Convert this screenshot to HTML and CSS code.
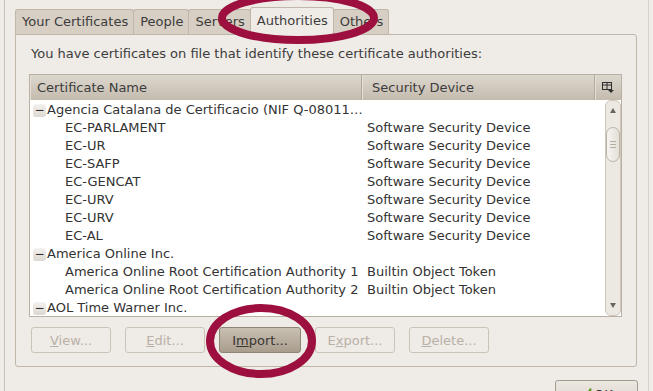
FILE: index.html
```html
<!DOCTYPE html>
<html lang="en">
<head>
    <meta charset="UTF-8">
    <title>Certificate Manager</title>
    <link rel="stylesheet" href="styles.css">
</head>
<body>
    <div class="dialog">
        <div class="tabs">
            <div class="tab">Your Certificates</div>
            <div class="tab">People</div>
            <div class="tab">Servers</div>
            <div class="tab active">Authorities</div>
            <div class="tab">Others</div>
        </div>
        <div class="panel">
            <p class="intro">You have certificates on file that identify these certificate authorities:</p>
            <div class="tree">
                <div class="tree-head">
                    <div class="col col-name">Certificate Name</div>
                    <div class="col col-device">Security Device</div>
                    <div class="col col-pick">
                        <svg width="12" height="11" viewBox="0 0 12 11">
                            <rect x="0.5" y="0.5" width="9" height="7" fill="none" stroke="#2e2e2e"/>
                            <line x1="0.5" y1="3" x2="9.5" y2="3" stroke="#2e2e2e"/>
                            <line x1="5" y1="0.5" x2="5" y2="7.5" stroke="#2e2e2e"/>
                            <polygon points="6,8 12,8 9,11" fill="#2e2e2e"/>
                        </svg>
                    </div>
                </div>
                <div class="tree-body">
                    <div class="rows">
                        <div class="row parent"><span class="name"><span class="expander">&minus;</span>Agencia Catalana de Certificacio (NIF Q-08011…</span><span class="device"></span></div>
                        <div class="row"><span class="name">EC-PARLAMENT</span><span class="device">Software Security Device</span></div>
                        <div class="row"><span class="name">EC-UR</span><span class="device">Software Security Device</span></div>
                        <div class="row"><span class="name">EC-SAFP</span><span class="device">Software Security Device</span></div>
                        <div class="row"><span class="name">EC-GENCAT</span><span class="device">Software Security Device</span></div>
                        <div class="row"><span class="name">EC-URV</span><span class="device">Software Security Device</span></div>
                        <div class="row"><span class="name">EC-URV</span><span class="device">Software Security Device</span></div>
                        <div class="row"><span class="name">EC-AL</span><span class="device">Software Security Device</span></div>
                        <div class="row parent"><span class="name"><span class="expander">&minus;</span>America Online Inc.</span><span class="device"></span></div>
                        <div class="row"><span class="name">America Online Root Certification Authority 1</span><span class="device">Builtin Object Token</span></div>
                        <div class="row"><span class="name">America Online Root Certification Authority 2</span><span class="device">Builtin Object Token</span></div>
                        <div class="row parent"><span class="name"><span class="expander">&minus;</span>AOL Time Warner Inc.</span><span class="device"></span></div>
                    </div>
                    <div class="scrollbar">
                        <div class="arrow up"></div>
                        <div class="thumb"><span></span><span></span><span></span></div>
                        <div class="arrow down"></div>
                    </div>
                </div>
            </div>
            <div class="buttons">
                <button class="btn" disabled><u>V</u>iew...</button>
                <button class="btn" disabled><u>E</u>dit...</button>
                <button class="btn hot">I<u>m</u>port...</button>
                <button class="btn" disabled>E<u>x</u>port...</button>
                <button class="btn" disabled><u>D</u>elete...</button>
            </div>
        </div>
        <div class="actions">
            <button class="btn ok">
                <svg width="12" height="12" viewBox="0 0 12 12">
                    <path d="M1.5 6.5 L4.5 10 L10.5 1.5" fill="none" stroke="#5c9a1e" stroke-width="2.2" stroke-linecap="round" stroke-linejoin="round"/>
                </svg>
                OK
            </button>
        </div>
    </div>

    <!-- hand-drawn marks over the screenshot -->
    <svg class="marks" width="653" height="391" viewBox="0 0 653 391">
        <ellipse cx="298" cy="18" rx="76" ry="22" fill="none" stroke="#9c0f3e" stroke-width="8"/>
        <ellipse cx="261" cy="341" rx="51" ry="33" fill="none" stroke="#9c0f3e" stroke-width="8"/>
    </svg>
</body>
</html>
```

FILE: styles.css
```css
* {
    margin: 0;
    padding: 0;
    box-sizing: border-box;
}

body {
    background: #efebe7;
    font-family: 'DejaVu Sans', 'Liberation Sans', sans-serif;
    font-size: 13px;
    color: #3c3c3c;
    height: 391px;
    overflow: hidden;
    position: relative;
}

.dialog {
    margin: 0 4px;
    height: 391px;
    border-left: 1px solid #c9c1b5;
    border-right: 1px solid #d6cfc5;
    padding: 7px 11px 0 10px;
}

/* notebook tabs */
.tabs {
    display: flex;
    align-items: flex-end;
    height: 28px;
    margin-bottom: -1px;
    position: relative;
    z-index: 1;
}

.tab {
    height: 25px;
    margin-bottom: 1px;
    margin-right: -1px;
    padding: 0 5px 0 6px;
    line-height: 24px;
    background: #d7cfc3;
    border: 1px solid #c0b6a9;
    border-bottom: none;
    border-radius: 3px 3px 0 0;
    color: #3c3c3c;
    white-space: nowrap;
}

.tab.active {
    height: 28px;
    margin-bottom: 0;
    line-height: 26px;
    background: #efebe7;
    position: relative;
    z-index: 1;
}

.panel {
    height: 333px;
    border: 1px solid #c0b6a9;
    border-radius: 0 3px 3px 3px;
    padding: 10px 14px 0 13px;
}

.intro {
    height: 18px;
    line-height: 18px;
    padding-left: 2px;
    margin-bottom: 11px;
    white-space: nowrap;
}

/* certificate tree */
.tree {
    border: 1px solid #b9afa2;
    background: #fff;
}

.tree-head {
    display: flex;
    height: 25px;
    background: linear-gradient(#ddd7ce, #c4bbae);
    line-height: 25px;
}

.tree-head .col {
    border-right: 1px solid #b3a999;
    box-shadow: inset 1px 0 0 #e4dfd7;
}

.col-name {
    width: 332px;
    padding-left: 7px;
}

.col-device {
    width: 233px;
    padding-left: 10px;
}

.col-pick {
    width: 26px;
    border-right: none !important;
    display: flex;
    align-items: center;
    justify-content: center;
}

.tree-body {
    display: flex;
    height: 216px;
}

.rows {
    flex: 1;
    padding-top: 1px;
}

.row {
    display: flex;
    height: 18px;
    line-height: 18px;
    color: #333;
    white-space: nowrap;
}

.row .name {
    width: 332px;
    padding-left: 35px;
    overflow: hidden;
}

.row.parent .name {
    padding-left: 3px;
    display: flex;
    align-items: center;
}

.row .device {
    padding-left: 5px;
}

.expander {
    width: 13px;
    height: 13px;
    margin-right: 1px;
    border-radius: 3px;
    background: linear-gradient(#f4f2ef, #dcd7d0);
    font-size: 12px;
    line-height: 12px;
    text-align: center;
    color: #2e2e2e;
    flex-shrink: 0;
}

/* scrollbar */
.scrollbar {
    width: 16px;
    border: 1px solid #cfc7bb;
    border-radius: 6px;
    background: #ece8e2;
    display: flex;
    flex-direction: column;
    align-items: center;
}

.arrow {
    width: 0;
    height: 0;
    border-left: 3px solid transparent;
    border-right: 3px solid transparent;
}

.arrow.up {
    margin-top: 7px;
    border-bottom: 5px solid #6d665d;
}

.arrow.down {
    margin-top: auto;
    margin-bottom: 7px;
    border-top: 5px solid #6d665d;
}

.thumb {
    width: 14px;
    height: 35px;
    margin-top: 14px;
    border: 1px solid #bdb3a6;
    border-radius: 7px;
    background: linear-gradient(90deg, #f6f4f1, #e4dfd8);
    display: flex;
    flex-direction: column;
    justify-content: center;
    align-items: center;
    gap: 2px;
}

.thumb span {
    width: 6px;
    height: 1px;
    background: #b6ada1;
}

/* buttons */
.buttons {
    display: flex;
    gap: 14px;
    margin: 10px 0 0 2px;
}

.btn {
    width: 80px;
    height: 26px;
    border: 1px solid #cbc3b8;
    border-radius: 3px;
    background: #efebe7;
    font-family: inherit;
    font-size: 13px;
    color: #b9b1a6;
}

.btn.hot {
    width: 82px;
    border-color: #8f8576;
    background: linear-gradient(#c9c0b3, #a89d8d);
    color: #3a3631;
}

.actions {
    display: flex;
    justify-content: flex-end;
    margin-top: 13px;
}

.btn.ok {
    width: 83px;
    height: 28px;
    margin-right: -1px;
    border-color: #a59c8f;
    background: linear-gradient(#ece8e2, #d9d2c7);
    color: #3a3631;
    display: flex;
    align-items: center;
    justify-content: center;
    gap: 2px;
}

.marks {
    position: absolute;
    left: 0;
    top: 0;
    z-index: 5;
    pointer-events: none;
}
```
